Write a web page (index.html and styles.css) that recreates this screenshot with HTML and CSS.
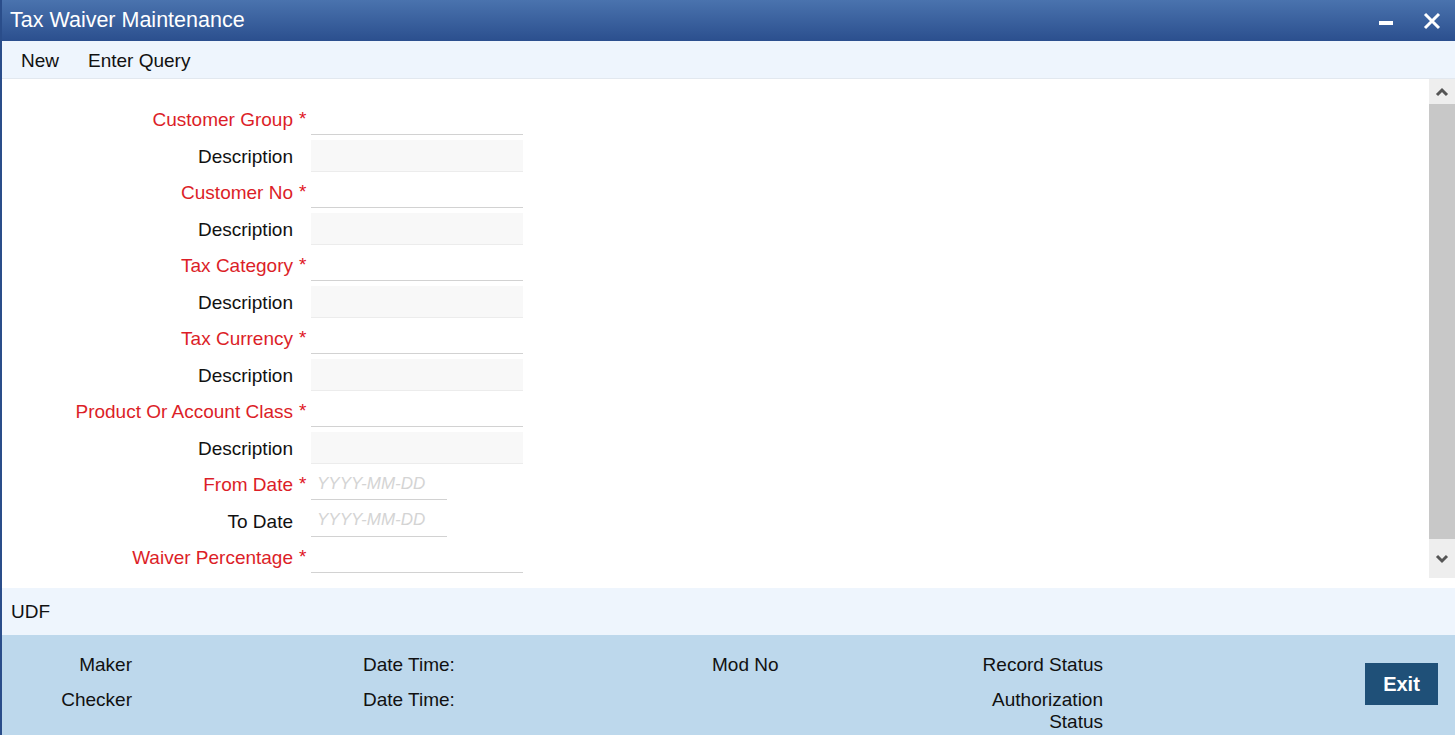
FILE: index.html
```html
<!DOCTYPE html>
<html>
<head>
<meta charset="UTF-8">
<title>Tax Waiver Maintenance</title>
<link rel="stylesheet" href="styles.css">
</head>
<body>
<div class="window">
	<!-- Title bar -->
	<div class="titlebar">
		<span class="title">Tax Waiver Maintenance</span>
		<span class="winbtns">
			<svg class="winbtn" width="16" height="16" viewBox="0 0 16 16"><rect x="1" y="8" width="14" height="4" fill="#fff"/></svg>
			<svg class="winbtn" width="18" height="18" viewBox="0 0 18 18"><path d="M2 2 L16 16 M16 2 L2 16" stroke="#fff" stroke-width="3" fill="none"/></svg>
		</span>
	</div>

	<!-- Toolbar -->
	<div class="toolbar">
		<span class="tool">New</span>
		<span class="tool">Enter Query</span>
	</div>

	<!-- Main form -->
	<div class="content">
		<div class="form">
			<label class="req">Customer Group</label><span class="star">*</span><input class="fld" type="text">
			<label>Description</label><span></span><input class="fld ro" type="text" readonly>
			<label class="req">Customer No</label><span class="star">*</span><input class="fld" type="text">
			<label>Description</label><span></span><input class="fld ro" type="text" readonly>
			<label class="req">Tax Category</label><span class="star">*</span><input class="fld" type="text">
			<label>Description</label><span></span><input class="fld ro" type="text" readonly>
			<label class="req">Tax Currency</label><span class="star">*</span><input class="fld" type="text">
			<label>Description</label><span></span><input class="fld ro" type="text" readonly>
			<label class="req">Product Or Account Class</label><span class="star">*</span><input class="fld" type="text">
			<label>Description</label><span></span><input class="fld ro" type="text" readonly>
			<label class="req">From Date</label><span class="star">*</span><input class="fld date" type="text" placeholder="YYYY-MM-DD">
			<label>To Date</label><span></span><input class="fld date" type="text" placeholder="YYYY-MM-DD">
			<label class="req">Waiver Percentage</label><span class="star">*</span><input class="fld" type="text">
		</div>
		<div class="scrollbar">
			<div class="sb-arrow">
				<svg width="14" height="10" viewBox="0 0 14 10"><path d="M2 8 L7 3 L12 8" stroke="#555" stroke-width="3" fill="none"/></svg>
			</div>
			<div class="sb-thumb"></div>
			<div class="sb-arrow">
				<svg width="14" height="10" viewBox="0 0 14 10"><path d="M2 2 L7 7 L12 2" stroke="#555" stroke-width="3" fill="none"/></svg>
			</div>
		</div>
	</div>

	<!-- UDF -->
	<div class="udf">UDF</div>

	<!-- Audit footer -->
	<div class="footer">
		<span class="f-lbl">Maker</span>
		<span></span>
		<span>Date Time:</span>
		<span>Mod No</span>
		<span class="f-rt">Record Status</span>
		<span></span>
		<button class="exitbtn" type="button">Exit</button>
		<span class="f-lbl">Checker</span>
		<span></span>
		<span>Date Time:</span>
		<span></span>
		<span class="f-rt">Authorization Status</span>
		<span></span>
	</div>
</div>
</body>
</html>
```

FILE: styles.css
```css
html, body {
	margin: 0;
	padding: 0;
}
body {
	font-family: "Liberation Sans", Arial, sans-serif;
	font-size: 19px;
	color: #111111;
	background: #ffffff;
}
.window {
	display: flex;
	flex-direction: column;
	height: 735px;
	border-left: 2px solid #2a4d8a;
	overflow: hidden;
}
.titlebar {
	display: flex;
	align-items: center;
	justify-content: space-between;
	height: 41px;
	flex: none;
	padding: 0 14px 0 8px;
	margin-left: -2px;
	background: linear-gradient(#4a73ae, #2b4f8e);
	color: #ffffff;
}
.title {
	font-size: 21.5px;
	padding-left: 2px;
}
.winbtns {
	display: flex;
	align-items: center;
	gap: 29px;
}
.winbtn {
	display: block;
}
.toolbar {
	display: flex;
	align-items: center;
	gap: 29px;
	height: 38px;
	flex: none;
	padding: 2px 0 0 19px;
	box-sizing: border-box;
	background: #eef5fd;
	border-bottom: 1px solid #e2e8ef;
}
.content {
	display: flex;
	flex: none;
	height: 509px;
	background: #ffffff;
}
.form {
	flex: 1;
	display: grid;
	grid-template-columns: 291px 18px 212px;
	grid-auto-rows: 36.5px;
	align-items: center;
	align-content: start;
	padding-top: 23px;
}
.form label {
	text-align: right;
	white-space: nowrap;
}
.form label.req {
	color: #dc1e28;
}
.star {
	color: #e0141e;
	padding-left: 6px;
	align-self: start;
	padding-top: 6px;
}
.fld {
	box-sizing: border-box;
	height: 32px;
	margin: 0 0 2px 0;
	border: none;
	border-bottom: 1px solid #d2d2d2;
	background: #ffffff;
	font-family: "Liberation Sans", Arial, sans-serif;
	font-size: 17px;
	padding: 0 6px;
	outline: none;
}
.fld.ro {
	background: #f8f8f8;
	border-bottom-color: #ececec;
}
.fld.date {
	width: 136px;
}
.fld::placeholder {
	color: #d4d4d4;
	font-style: italic;
}
.scrollbar {
	width: 26px;
	flex: none;
	display: flex;
	flex-direction: column;
	height: 499px;
	background: #eeeeee;
}
.sb-arrow {
	display: flex;
	align-items: center;
	justify-content: center;
	height: 25px;
}
.sb-arrow:last-child {
	height: 39px;
}
.sb-thumb {
	flex: 1;
	background: #c8c8c8;
}
.udf {
	display: flex;
	align-items: center;
	height: 47px;
	flex: none;
	padding-left: 9px;
	background: #eef5fd;
}
.footer {
	flex: 1;
	display: grid;
	grid-template-columns: 130px 231px 349px 231px 160px 262px 73px;
	grid-template-rows: auto auto;
	row-gap: 13px;
	align-content: start;
	padding-top: 19px;
	line-height: 22px;
	background: #bdd8ec;
}
.f-lbl, .f-rt {
	text-align: right;
}
.exitbtn {
	grid-row: 1 / span 2;
	grid-column: 7;
	align-self: start;
	margin-top: 9px;
	height: 42px;
	width: 73px;
	border: none;
	background: #1f5078;
	color: #ffffff;
	font-family: "Liberation Sans", Arial, sans-serif;
	font-size: 20px;
	font-weight: bold;
	padding: 0;
}
```
